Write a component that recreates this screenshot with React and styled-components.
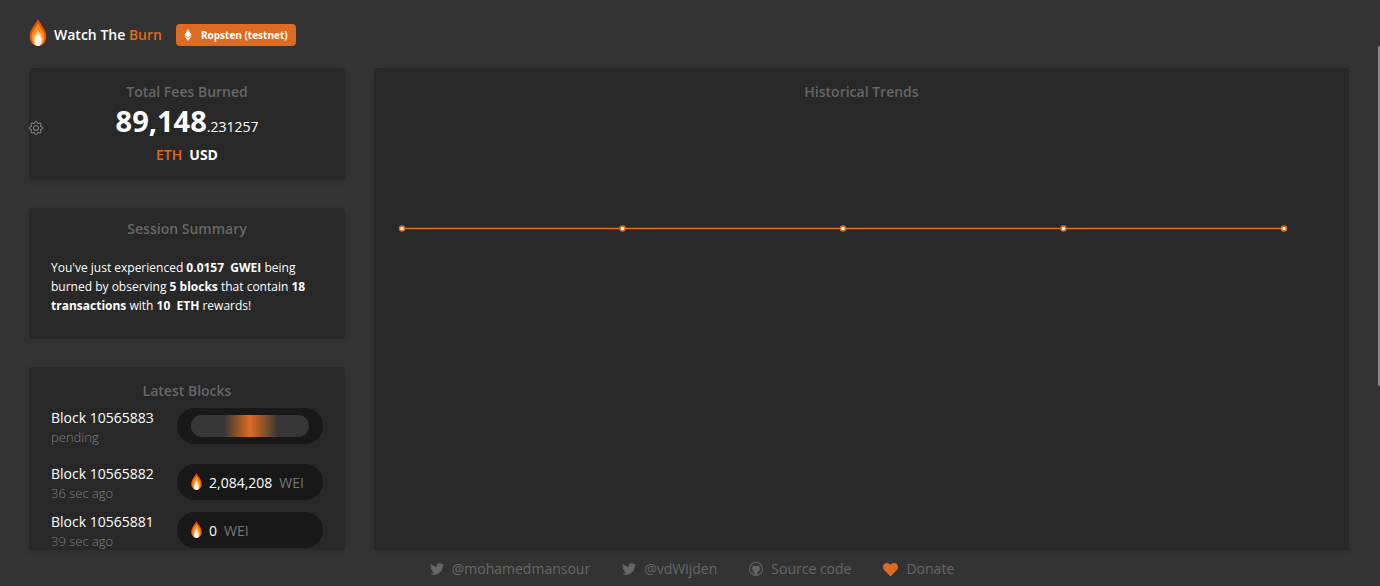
import React from "react";
import styled, { createGlobalStyle, css } from "styled-components";
import { FaEthereum, FaTwitter, FaHeart } from "react-icons/fa";
import { BsGear } from "react-icons/bs";
import { VscGithub } from "react-icons/vsc";

const color = {
  page: "#333333",
  card: "#282828",
  pill: "#181818",
  brand: "#dd6b20",
  muted: "#666666",
  text: "#ffffff",
};

const GlobalStyle = createGlobalStyle`
  * { box-sizing: border-box; }
  body {
    margin: 0;
    background: ${color.page};
    color: ${color.text};
    font-family: "Open Sans", "Noto Sans", sans-serif;
    font-size: 14px;
  }
  button { font: inherit; color: inherit; background: none; border: 0; padding: 0; cursor: pointer; }
  h1, h2, p, ul { margin: 0; padding: 0; }
`;

const Page = styled.div`
  position: relative;
  display: flex;
  flex-direction: column;
  height: 100vh;
  overflow: hidden;
`;

const Header = styled.header`
  display: flex;
  align-items: center;
  height: 68px;
  flex: none;
  padding: 2px 28px 0;
`;

const Brand = styled.h1`
  display: flex;
  align-items: center;
  gap: 6px;
  margin-right: 14px;
  font-size: 14px;
  line-height: 20px;
  font-weight: 600;
  white-space: nowrap;

  svg { margin-bottom: 6px; }
`;

const Accent = styled.span`
  color: ${color.brand};
`;

const NetworkButton = styled.button`
  && {
    display: flex;
    align-items: center;
    gap: 7px;
    height: 22px;
    padding: 0 8px 0 6px;
    border-radius: 4px;
    background: ${color.brand};
    font-size: 10px;
    font-weight: 700;
  }
`;

const Dashboard = styled.main`
  display: flex;
  flex: 1;
  min-height: 0;
  gap: 29px;
  padding: 0 31px 0 29px;
`;

const Sidebar = styled.div`
  display: flex;
  flex-direction: column;
  gap: 28px;
  width: 316px;
  flex: none;
`;

const Card = styled.section`
  position: relative;
  display: flex;
  flex-direction: column;
  background: ${color.card};
  border-radius: 4px;
  box-shadow: 0 2px 6px rgba(0, 0, 0, 0.12);
  padding: ${(p) => p.$pad || "13px 22px"};
  ${(p) =>
    p.$fill &&
    css`
      flex: 1;
      min-width: 0;
      min-height: 0;
      overflow: hidden;
      border-radius: 4px 4px 0 0;
    `}
`;

const CardTitle = styled.h2`
  color: ${color.muted};
  font-size: 14px;
  line-height: 22px;
  font-weight: 600;
  text-align: center;
`;

const Total = styled.p`
  display: flex;
  justify-content: center;
  align-items: baseline;
  height: 40px;
  line-height: 36px;

  strong { font-size: 29px; }
`;

const CurrencySwitch = styled.div`
  display: flex;
  justify-content: center;
  gap: 7px;
`;

const CurrencyButton = styled.button`
  && {
    color: ${(p) => (p.$active ? color.brand : color.text)};
    line-height: 24px;
    font-weight: ${(p) => (p.$active ? 600 : 700)};
  }
`;

const SettingsButton = styled.button`
  && {
    position: absolute;
    left: 0;
    top: 53px;
    display: flex;
    color: #8a8a8a;
  }
`;

const Summary = styled.p`
  margin-top: 18px;
  font-size: 12px;
  line-height: 19px;
`;

const BlockList = styled.ul`
  padding-top: 6px;
  list-style: none;
`;

const BlockRow = styled.li`
  display: flex;
  justify-content: space-between;
  align-items: flex-start;
  margin-bottom: ${(p) => (p.$pending ? 18 : 10)}px;
`;

const BlockName = styled.div`
  line-height: 20px;
  font-weight: 500;
`;

const BlockAge = styled.div`
  color: #808080;
  font-size: 13px;
  line-height: 18px;
  font-weight: 300;
`;

const Pill = styled.div`
  display: flex;
  align-items: center;
  gap: 7px;
  width: 146px;
  height: 36px;
  padding: 0 14px;
  border-radius: 18px;
  background: ${color.pill};
  font-weight: 500;

  svg { margin-bottom: 2px; }
`;

const Unit = styled.span`
  color: #777777;
  font-weight: 400;
`;

const PendingBar = styled.div`
  flex: 1;
  height: 22px;
  border-radius: 11px;
  background: linear-gradient(90deg, #363636 28%, ${color.brand} 50%, #363636 74%);
`;

const ChartArea = styled.div`
  display: flex;
  flex: 1;
  min-height: 0;
  padding: 0 65px 0 28px;
`;

const Chart = styled.svg`
  display: block;
  width: 100%;
  height: 100%;
  overflow: visible;
`;

const Footer = styled.footer`
  display: flex;
  justify-content: center;
  gap: 32px;
  height: 36px;
  flex: none;
  padding: 2px 0 0 4px;
`;

const FooterLink = styled.a`
  display: flex;
  align-items: center;
  gap: 8px;
  color: ${color.muted};
  line-height: 34px;
  text-decoration: none;
`;

const ScrollThumb = styled.div`
  position: absolute;
  right: 0;
  top: 46px;
  width: 2px;
  height: 58%;
  border-radius: 2px 0 0 2px;
  background: #8c8c8c;
`;

function Flame({ width, height }) {
  return (
    <svg width={width} height={height} viewBox="0 0 18 28" aria-hidden="true">
      <path d="M9 0C10.500 4.500 18 10.500 17.600 18.500 17.300 25 13.500 28 9 28S.7 25 .4 18.500C0 10.500 7.500 4.500 9 0z" fill="#e8500e" />
      <path d="M9 4.500c1.200 4 7 8 6.700 14.500C15.400 25 12.500 28 9 28s-6.400-3-6.700-9C2 12.500 7.800 8.500 9 4.500z" fill="#ff8c12" />
      <path d="M9 11c1 3 5 5.500 4.800 10C13.600 25.500 11.500 28 9 28s-4.600-2.500-4.800-7C4 16.500 8 14 9 11z" fill="#ffc876" />
      <path d="M9 14.500c.8 2.500 3.700 4.500 3.600 8C12.500 26 11 28 9 28s-3.500-2-3.600-5.500c-.1-3.500 2.800-5.500 3.600-8z" fill="#fff6e6" />
    </svg>
  );
}

const blocks = [
  { id: 10565883, age: "pending", pending: true },
  { id: 10565882, age: "36 sec ago", burned: "2,084,208" },
  { id: 10565881, age: "39 sec ago", burned: "0" },
];

const links = [
  { label: "@mohamedmansour", icon: <FaTwitter size={14} /> },
  { label: "@vdWijden", icon: <FaTwitter size={14} /> },
  { label: "Source code", icon: <VscGithub size={14} /> },
  { label: "Donate", icon: <FaHeart size={15} color={color.brand} /> },
];

const points = ["0%", "25%", "50%", "75%", "100%"];

export default function App() {
  return (
    <Page>
      <GlobalStyle />
      <Header>
        <Brand>
          <Flame width={20} height={27} />
          <span>
            Watch The <Accent>Burn</Accent>
          </span>
        </Brand>
        <NetworkButton type="button">
          <FaEthereum size={12} />
          Ropsten (testnet)
        </NetworkButton>
      </Header>

      <Dashboard>
        <Sidebar>
          <Card>
            <SettingsButton type="button" aria-label="Settings">
              <BsGear size={14} />
            </SettingsButton>
            <CardTitle>Total Fees Burned</CardTitle>
            <Total>
              <strong>89,148</strong>
              <span>.231257</span>
            </Total>
            <CurrencySwitch>
              <CurrencyButton type="button" $active>ETH</CurrencyButton>
              <CurrencyButton type="button">USD</CurrencyButton>
            </CurrencySwitch>
          </Card>

          <Card $pad="10px 22px 24px">
            <CardTitle>Session Summary</CardTitle>
            <Summary>
              You've just experienced <b>0.0157 &nbsp;GWEI</b> being burned by observing{" "}
              <b>5 blocks</b> that contain <b>18 transactions</b> with <b>10 &nbsp;ETH</b> rewards!
            </Summary>
          </Card>

          <Card $fill $pad="13px 22px 0">
            <CardTitle>Latest Blocks</CardTitle>
            <BlockList>
              {blocks.map((b) => (
                <BlockRow key={b.id} $pending={b.pending}>
                  <div>
                    <BlockName>Block {b.id}</BlockName>
                    <BlockAge>{b.age}</BlockAge>
                  </div>
                  <Pill>
                    {b.pending ? (
                      <PendingBar />
                    ) : (
                      <>
                        <Flame width={11} height={17} />
                        {b.burned}
                        <Unit>WEI</Unit>
                      </>
                    )}
                  </Pill>
                </BlockRow>
              ))}
            </BlockList>
          </Card>
        </Sidebar>

        <Card $fill $pad="13px 0">
          <CardTitle>Historical Trends</CardTitle>
          <ChartArea>
            <Chart role="img" aria-label="Historical trend of burned fees">
              <line x1="0" x2="100%" y1="125.5" y2="125.5" stroke={color.brand} strokeWidth="1.500" />
              {points.map((x) => (
                <circle key={x} cx={x} cy="125.5" r="2.500" fill="#fff" stroke={color.brand} strokeWidth="1.500" />
              ))}
            </Chart>
          </ChartArea>
        </Card>
      </Dashboard>

      <Footer>
        {links.map((l) => (
          <FooterLink key={l.label} href="#">
            {l.icon}
            {l.label}
          </FooterLink>
        ))}
      </Footer>
      <ScrollThumb aria-hidden="true" />
    </Page>
  );
}
